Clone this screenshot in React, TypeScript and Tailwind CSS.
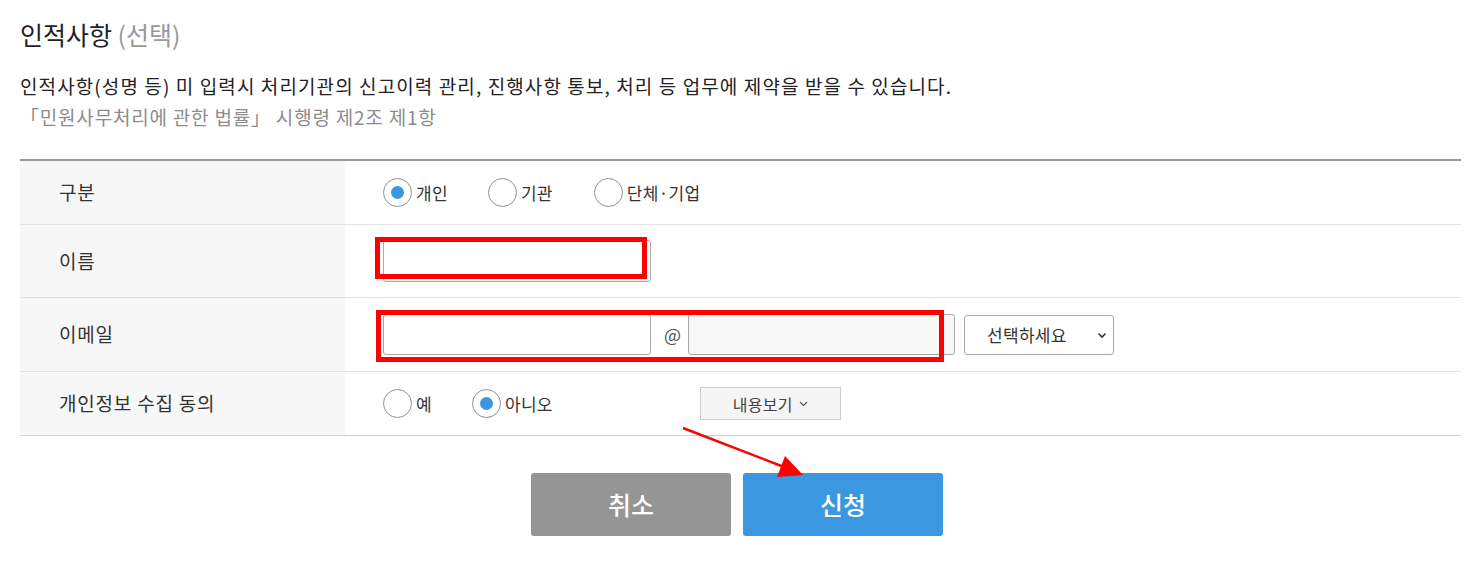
import React from "react";

const font = { fontFamily: '"Noto Sans CJK KR", "Noto Sans", sans-serif' };

function Radio({ checked, label, className = "" }: { checked?: boolean; label: string; className?: string }) {
    return (
        <label className={"flex items-center " + className}>
            <span className="flex h-[29px] w-[29px] items-center justify-center rounded-full border border-[#8f8f8f] bg-white">
                {checked && <span className="h-[13px] w-[13px] rounded-full bg-[#3b97e0]"></span>}
            </span>
            <span className="ml-[4px] text-[17px] tracking-[0.3px] text-[#333]">{label}</span>
        </label>
    );
}

function Row({ label, h, children, last }: { label: string; h: string; children: React.ReactNode; last?: boolean }) {
    return (
        <div className={"flex " + h + (last ? "" : " border-b border-[#e3e3e3]")}>
            <div className="flex w-[325px] items-center bg-[#f7f7f7] pl-[39px] text-[19px] tracking-[0.8px] text-[#333]">{label}</div>
            <div className="relative flex flex-1 items-center pl-[38px]">{children}</div>
        </div>
    );
}

export default function App() {
    return (
        <div className="relative h-[561px] w-[1472px] bg-white" style={font}>
            <div className="px-[20px] pt-[16px] pr-[11px]">
                <h2 className="text-[25px] leading-[36px] text-[#222]">
                    인적사항 <span className="text-[#999]">(선택)</span>
                </h2>
                <p className="mt-[18px] text-[19px] leading-[31px] tracking-[1.1px] text-[#222]">
                    인적사항(성명 등) 미 입력시 처리기관의 신고이력 관리, 진행사항 통보, 처리 등 업무에 제약을 받을 수 있습니다.
                </p>
                <p className="text-[19px] leading-[31px] tracking-[0.8px] text-[#8c8c8c]">
                    「민원사무처리에 관한 법률」 시행령 제2조 제1항
                </p>

                <div className="mt-[27px] border-t-2 border-b border-t-[#999] border-b-[#cfcfcf]">
                    <Row label="구분" h="h-[64px]">
                        <Radio checked label="개인" />
                        <Radio label="기관" className="ml-[40px]" />
                        <Radio label="단체·기업" className="ml-[41px]" />
                    </Row>
                    <Row label="이름" h="h-[73px]">
                        <div className="relative">
                            <div className="h-[42px] w-[268px] rounded-[3px] border border-[#a9a9a9] bg-white"></div>
                            <div className="absolute left-[-8px] top-[-3px] h-[42px] w-[272px] border-[5px] border-[#ff0000]"></div>
                        </div>
                    </Row>
                    <Row label="이메일" h="h-[74px]">
                        <div className="relative flex items-center">
                            <div className="h-[41px] w-[268px] rounded-[3px] border border-[#a9a9a9] bg-white"></div>
                            <span className="ml-[13px] mr-[7px] text-[18px] text-[#555]">@</span>
                            <div className="h-[41px] w-[267px] rounded-[3px] border border-[#a9a9a9] bg-[#f8f8f8]"></div>
                            <div className="ml-[9px] flex h-[40px] w-[150px] items-center justify-between rounded-[3px] border border-[#a9a9a9] bg-white pl-[22px] pr-[6px] text-[17px] tracking-[0.3px] text-[#333]">
                                선택하세요
                                <svg width="10" height="8" viewBox="0 0 10 8" fill="none">
                                    <path d="M1.5 2.5 L5 6 L8.5 2.5" stroke="#333" strokeWidth="1.6" />
                                </svg>
                            </div>
                            <div className="absolute left-[-7px] top-[-4px] h-[52px] w-[568px] border-[5px] border-[#ff0000]"></div>
                        </div>
                    </Row>
                    <Row label="개인정보 수집 동의" h="h-[63px]" last>
                        <Radio label="예" />
                        <Radio checked label="아니오" className="ml-[40px]" />
                        <button className="ml-[147px] flex h-[33px] w-[141px] items-center justify-center gap-[6px] border border-[#cccccc] bg-[#f5f5f5] text-[16px] tracking-[0.3px] text-[#444]">
                            내용보기
                            <svg width="9" height="6" viewBox="0 0 9 6" fill="none">
                                <path d="M1 1 L4.5 4.5 L8 1" stroke="#555" strokeWidth="1.1" />
                            </svg>
                        </button>
                    </Row>
                </div>

                <div className="mt-[37px] flex justify-center gap-[12px] pr-[7px]">
                    <button className="h-[63px] w-[200px] rounded-[3px] bg-[#959595] text-[25px] font-medium text-white">취소</button>
                    <button className="h-[63px] w-[200px] rounded-[3px] bg-[#3a97e0] text-[25px] font-medium text-white">신청</button>
                </div>
            </div>

            <svg className="absolute left-0 top-0" width="1472" height="561" viewBox="0 0 1472 561">
                <line x1="683" y1="428" x2="784" y2="467" stroke="#ff0000" strokeWidth="2.5" />
                <polygon points="803,475 777,477 785,456" fill="#ff0000" />
            </svg>
        </div>
    );
}
